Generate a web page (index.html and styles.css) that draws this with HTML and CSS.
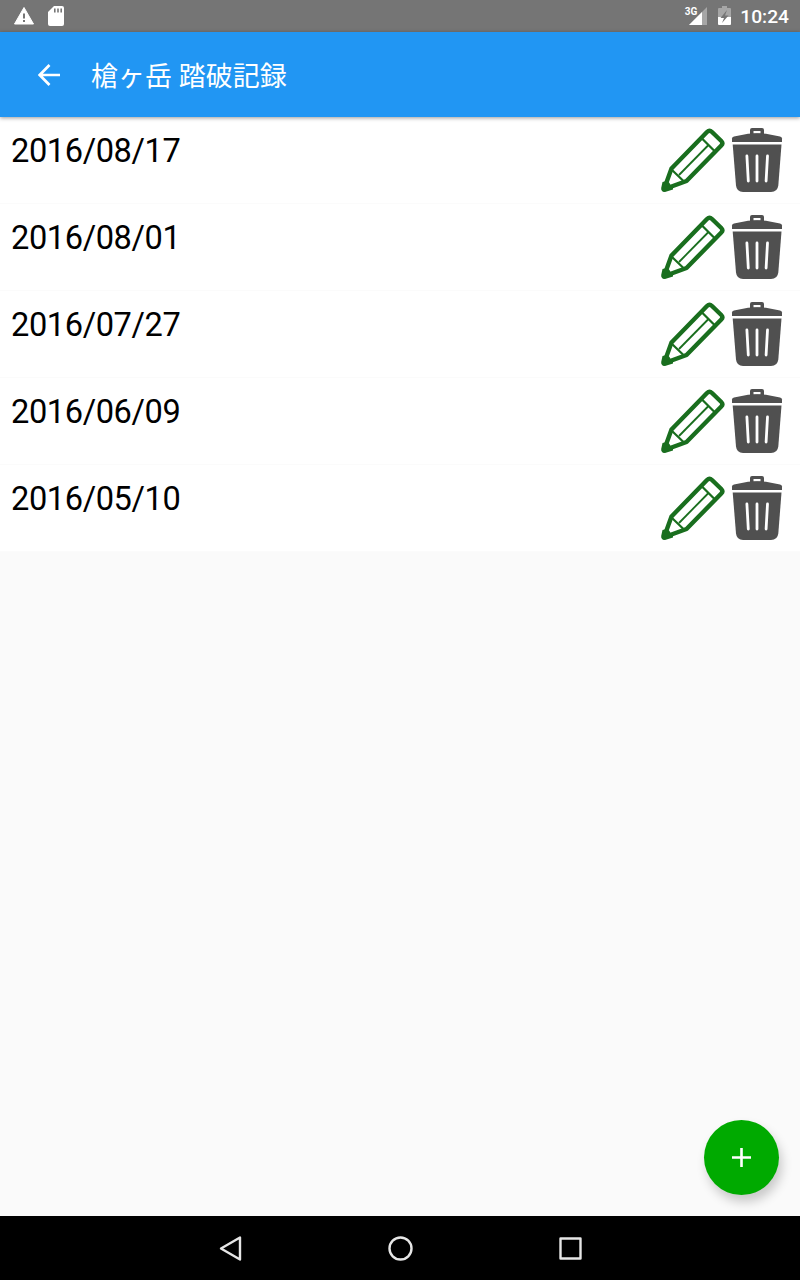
FILE: index.html
```html
<!DOCTYPE html>
<html lang="ja">
<head>
    <meta charset="UTF-8">
    <meta name="viewport" content="width=device-width, initial-scale=1.0">
    <title>槍ヶ岳 踏破記録</title>
    <link rel="stylesheet" href="styles.css">
</head>
<body>
    <!-- Shared list icons -->
    <svg class="icon-defs">
        <symbol id="icon-edit" viewBox="0 0 64 64">
            <g fill="none" stroke="#196e1e" stroke-linejoin="round">
                <path stroke-width="4.400" d="M10.500 40.500L46 4Q48.500 1.500 51 4L60.300 13Q62.500 15.200 60.300 17.500L25.500 53L3 61.300Z"/>
                <path stroke-width="2.200" d="M40.500 10L53.500 23M10.500 41.500L23.500 54"/>
                <path stroke-width="1.800" d="M47.500 17L18 47"/>
            </g>
            <path fill="#196e1e" d="M1.500 54Q7 52 8.500 55Q9.500 58 12 59.500V61.500L4 64Q0 64 .200 60Z"/>
        </symbol>
        <symbol id="icon-delete" viewBox="0 0 64 64">
            <g fill="#505050">
                <path fill-rule="evenodd" d="M25 7V2Q25 0 27 0H37Q39 0 39 2V7ZM28.500 3V5.500H35.500V3Z"/>
                <path d="M7 14V10.500Q7 9 9 8.500L23 5.700Q32 5 41 5.700L55 8.500Q57 9 57 10.500V14Z"/>
                <path d="M7.700 16.500H56.500L53.300 57.500Q52.500 64 46 64H18Q11.800 64 11 57.500Z"/>
            </g>
            <path fill="none" stroke="#fff" stroke-width="2.800" stroke-linecap="round" d="M21.900 28L23.300 53M32 28V53M42.500 28L41.100 53"/>
        </symbol>
    </svg>

    <div class="status-bar">
        <div class="status-group">
            <svg class="icon-warning" width="22" height="20" viewBox="0 0 22 20">
                <path fill="#fff" stroke="#fff" stroke-linejoin="round" d="M11 1.500L20.500 18H1.500Z"/>
                <path fill="#757575" d="M10 7.500h2v5h-2zM10 14h2v2h-2z"/>
            </svg>
            <svg class="icon-sd" width="16" height="20" viewBox="0 0 16 20">
                <path fill="#fff" d="M6 0H14Q16 0 16 2V18Q16 20 14 20H2Q0 20 0 18V6Z"/>
                <path fill="#757575" d="M6 2.500h1.600v4H6zM9.200 2.500h1.600v4H9.200zM12.400 2.500H14v4h-1.600z"/>
            </svg>
        </div>
        <div class="status-group">
            <span class="network">3G</span>
            <svg class="icon-signal" width="18" height="18" viewBox="0 0 18 18">
                <path fill="#a6a6a6" d="M18 0V18H0Z"/>
                <path fill="#fff" d="M13 5V18H0Z"/>
            </svg>
            <svg class="icon-battery" width="13" height="20" viewBox="0 0 13 20">
                <path fill="#a6a6a6" d="M4 0H9V2H12Q13 2 13 3V12H0V3Q0 2 1 2H4Z"/>
                <path fill="#fff" d="M0 11H13V18Q13 19 12 19H1Q0 19 0 18Z"/>
                <path fill="#757575" d="M9 4L2.500 12H6L4 17L10.500 9.500H7Z"/>
            </svg>
            <span class="clock">10:24</span>
        </div>
    </div>

    <header class="app-bar">
        <svg class="icon-back" width="22" height="22" viewBox="0 0 22 22">
            <path fill="none" stroke="#fff" stroke-width="2.700" d="M22 11H2M11.500 1L1.700 11L11.500 21"/>
        </svg>
        <h1>槍ヶ岳 踏破記録</h1>
    </header>

    <main class="content">
        <ul class="record-list">
            <li class="record">
                <span class="record-date">2016/08/17</span>
                <svg class="record-icon"><use href="#icon-edit"/></svg>
                <svg class="record-icon"><use href="#icon-delete"/></svg>
            </li>
            <li class="record">
                <span class="record-date">2016/08/01</span>
                <svg class="record-icon"><use href="#icon-edit"/></svg>
                <svg class="record-icon"><use href="#icon-delete"/></svg>
            </li>
            <li class="record">
                <span class="record-date">2016/07/27</span>
                <svg class="record-icon"><use href="#icon-edit"/></svg>
                <svg class="record-icon"><use href="#icon-delete"/></svg>
            </li>
            <li class="record">
                <span class="record-date">2016/06/09</span>
                <svg class="record-icon"><use href="#icon-edit"/></svg>
                <svg class="record-icon"><use href="#icon-delete"/></svg>
            </li>
            <li class="record">
                <span class="record-date">2016/05/10</span>
                <svg class="record-icon"><use href="#icon-edit"/></svg>
                <svg class="record-icon"><use href="#icon-delete"/></svg>
            </li>
        </ul>
        <button class="fab" aria-label="追加">
            <svg width="19" height="19" viewBox="0 0 19 19">
                <path stroke="#fff" stroke-width="2.600" d="M9.500 0V19M0 9.500H19"/>
            </svg>
        </button>
    </main>

    <nav class="nav-bar">
        <svg width="26" height="26" viewBox="0 0 26 26">
            <path d="M23 2.500V24.500L4 13.500Z"/>
        </svg>
        <svg width="26" height="26" viewBox="0 0 26 26">
            <circle cx="13.500" cy="13.500" r="11"/>
        </svg>
        <svg width="26" height="26" viewBox="0 0 26 26">
            <rect x="3.500" y="3.500" width="20" height="20"/>
        </svg>
    </nav>
</body>
</html>
```

FILE: styles.css
```css
* {
    box-sizing: border-box;
}

body {
    margin: 0;
    height: 100vh;
    display: flex;
    flex-direction: column;
    background-color: #fafafa;
    font-family: Roboto, "Noto Sans CJK JP", sans-serif;
    color: #000;
    overflow: hidden;
}

svg {
    display: block;
    flex: none;
}

.icon-defs {
    display: none;
}

/* Status bar */
.status-bar {
    flex: none;
    height: 32px;
    padding: 0 11px 0 13px;
    display: flex;
    justify-content: space-between;
    background-color: #757575;
    color: #fff;
}

.status-group {
    display: flex;
    align-items: center;
}

.icon-sd {
    margin-left: 13px;
}

.network {
    font-size: 10px;
    font-weight: bold;
    line-height: 10px;
    margin: 0 -8px 9px 0;
}

.icon-battery {
    margin: 0 9px 0 11px;
}

.clock {
    font-size: 19.2px;
    font-weight: 500;
    line-height: 32px;
    padding-top: 1px;
}

/* App bar */
.app-bar {
    position: relative;
    z-index: 1;
    flex: none;
    height: 85px;
    padding-left: 38px;
    display: flex;
    align-items: center;
    background-color: #2196f3;
    box-shadow: 0 1px 4px rgba(0, 0, 0, 0.4);
    color: #fff;
}

.app-bar h1 {
    margin: 0 0 1px 31px;
    font-size: 27px;
    font-weight: normal;
}

/* Record list */
.content {
    position: relative;
    flex: 1;
}

.record-list {
    margin: 0;
    padding: 0;
    list-style: none;
}

.record {
    height: 87px;
    padding: 11px;
    display: flex;
    background-color: #fff;
    border-bottom: 1px solid #fbfbfb;
}

.record-date {
    flex: 1;
    font-size: 32.6px;
    letter-spacing: -0.4px;
    line-height: 46px;
}

.record-icon {
    width: 64px;
    height: 64px;
}

.fab {
    position: absolute;
    right: 21px;
    bottom: 21px;
    width: 75px;
    height: 75px;
    padding: 0;
    display: flex;
    align-items: center;
    justify-content: center;
    border: none;
    border-radius: 50%;
    background-color: #00aa00;
    box-shadow: 3px 7px 11px rgba(0, 0, 0, 0.2);
}

/* Navigation bar */
.nav-bar {
    position: relative;
    flex: none;
    height: 64px;
    display: flex;
    align-items: center;
    justify-content: center;
    gap: 144px;
    background-color: #000;
}

.nav-bar svg {
    fill: none;
    stroke: #e6e6e6;
    stroke-width: 2.4;
    stroke-linejoin: round;
}
```
